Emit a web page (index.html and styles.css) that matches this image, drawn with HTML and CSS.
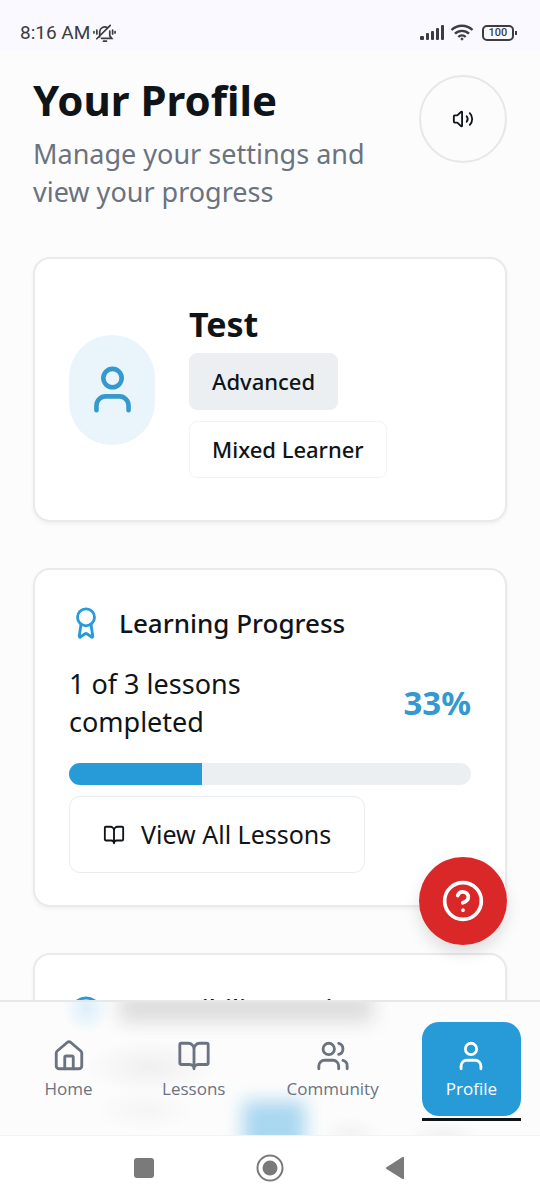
FILE: index.html
```html
<!DOCTYPE html>
<html lang="en">
<head>
    <meta charset="UTF-8">
    <meta name="viewport" content="width=device-width, initial-scale=1.0">
    <title>Your Profile</title>
    <link rel="stylesheet" href="styles.css">
</head>
<body>
    <div class="status-bar">
        <div class="status-group">
            <span class="clock">8:16 AM</span>
            <svg class="bell" viewBox="0 0 24 20" fill="none" stroke="currentColor" stroke-width="1.8" stroke-linecap="round">
                <path d="M7 14V8.500a5.200 5.200 0 0 1 8-4M17.500 8v5l2 2.500H9M4 16 18 2M11 18.500h3"/>
                <path d="M4 7v4M1 8.500v1.500M20.500 7v4M23 8.500v1.500"/>
            </svg>
        </div>
        <div class="status-group">
            <svg class="signal" viewBox="0 0 25 17" fill="currentColor">
                <rect x="0" y="12" width="4" height="4" rx="1"/>
                <rect x="6" y="9" width="3" height="7" rx="1"/>
                <rect x="11" y="7" width="3" height="9" rx="1"/>
                <rect x="16" y="4" width="3" height="12" rx="1"/>
                <rect x="21" y="1" width="3" height="15" rx="1"/>
            </svg>
            <svg class="wifi" viewBox="0 0 24 17" fill="none" stroke="currentColor" stroke-width="2.400">
                <path d="M1.500 6a15 15 0 0 1 21 0M5 9.700a10 10 0 0 1 14 0M8.300 13a5.400 5.400 0 0 1 7.400 0"/>
                <circle cx="12" cy="15" r="1" fill="currentColor" stroke-width="1"/>
            </svg>
            <span class="battery">100</span>
        </div>
    </div>

    <main class="content">
        <header class="page-header">
            <div>
                <h1>Your Profile</h1>
                <p class="subtitle">Manage your settings and view your progress</p>
            </div>
            <button class="audio-button" type="button" aria-label="Read page aloud">
                <svg class="icon icon-small" viewBox="0 0 24 24">
                    <path d="M11 4.700a.7.700 0 0 0-1.200-.5L6.400 7.600A1.400 1.400 0 0 1 5.400 8H3a1 1 0 0 0-1 1v6a1 1 0 0 0 1 1h2.400a1.400 1.400 0 0 1 1 .4l3.400 3.400a.7.700 0 0 0 1.200-.5z"/>
                    <path d="M16 9a5 5 0 0 1 0 6M19.400 18.400a9 9 0 0 0 0-12.700"/>
                </svg>
            </button>
        </header>

        <section class="card user-card">
            <div class="avatar">
                <svg class="icon" viewBox="0 0 24 24"><path d="M19 21v-2a4 4 0 0 0-4-4H9a4 4 0 0 0-4 4v2"/><circle cx="12" cy="7" r="4"/></svg>
            </div>
            <div class="user-info">
                <h2>Test</h2>
                <span class="badge badge-level">Advanced</span>
                <span class="badge">Mixed Learner</span>
            </div>
        </section>

        <section class="card">
            <h3 class="card-title">
                <svg class="icon" viewBox="0 0 24 24"><circle cx="12" cy="8" r="6"/><path d="M8.500 12.900 7.200 21.400a.5.500 0 0 0 .8.500l3.400-2.300a1 1 0 0 1 1.200 0l3.400 2.300a.5.500 0 0 0 .8-.5l-1.300-8.500"/></svg>
                Learning Progress
            </h3>
            <div class="progress-text">
                <p id="lessons-done">1 of 3 lessons completed</p>
                <strong>33%</strong>
            </div>
            <div class="progress-bar" role="progressbar" aria-labelledby="lessons-done" aria-valuenow="33" aria-valuemin="0" aria-valuemax="100">
                <div class="progress" style="width: 33%;"></div>
            </div>
            <a class="lessons-link" href="#lessons">
                <svg class="icon icon-small" viewBox="0 0 24 24"><path d="M12 7v14M3 18a1 1 0 0 1-1-1V4a1 1 0 0 1 1-1h5a4 4 0 0 1 4 4 4 4 0 0 1 4-4h5a1 1 0 0 1 1 1v13a1 1 0 0 1-1 1h-6a3 3 0 0 0-3 3 3 3 0 0 0-3-3z"/></svg>
                View All Lessons
            </a>
        </section>

        <section class="card">
            <h3 class="card-title">
                <svg class="icon" viewBox="0 0 24 24"><path d="M2.100 12.300a1 1 0 0 1 0-.7 10.700 10.700 0 0 1 19.800 0 1 1 0 0 1 0 .7 10.700 10.700 0 0 1-19.800 0"/><circle cx="12" cy="12" r="3"/></svg>
                Accessibility Settings
            </h3>
        </section>
    </main>

    <div class="bottom">
        <button class="help-button" type="button" aria-label="Help">
            <svg class="icon" viewBox="0 0 24 24"><circle cx="12" cy="12" r="10"/><path d="M9.100 9a3 3 0 0 1 5.800 1c0 2-3 3-3 3M12 17h.01"/></svg>
        </button>

        <nav class="tab-bar">
            <a class="tab" href="#home">
                <svg class="icon" viewBox="0 0 24 24"><path d="M15 21v-8a1 1 0 0 0-1-1h-4a1 1 0 0 0-1 1v8"/><path d="M3 10a2 2 0 0 1 .7-1.500l7-6a2 2 0 0 1 2.600 0l7 6A2 2 0 0 1 21 10v9a2 2 0 0 1-2 2H5a2 2 0 0 1-2-2z"/></svg>
                Home
            </a>
            <a class="tab" href="#lessons">
                <svg class="icon" viewBox="0 0 24 24"><path d="M12 7v14M3 18a1 1 0 0 1-1-1V4a1 1 0 0 1 1-1h5a4 4 0 0 1 4 4 4 4 0 0 1 4-4h5a1 1 0 0 1 1 1v13a1 1 0 0 1-1 1h-6a3 3 0 0 0-3 3 3 3 0 0 0-3-3z"/></svg>
                Lessons
            </a>
            <a class="tab" href="#community">
                <svg class="icon" viewBox="0 0 24 24"><path d="M16 21v-2a4 4 0 0 0-4-4H6a4 4 0 0 0-4 4v2M22 21v-2a4 4 0 0 0-3-3.870M16 3.130a4 4 0 0 1 0 7.750"/><circle cx="9" cy="7" r="4"/></svg>
                Community
            </a>
            <a class="tab active" href="#profile" aria-current="page">
                <svg class="icon" viewBox="0 0 24 24"><path d="M19 21v-2a4 4 0 0 0-4-4H9a4 4 0 0 0-4 4v2"/><circle cx="12" cy="7" r="4"/></svg>
                Profile
            </a>
        </nav>
    </div>

    <div class="system-nav">
        <button type="button" aria-label="Recent apps"><svg viewBox="0 0 28 28"><rect x="4" y="4" width="20" height="20" rx="3"/></svg></button>
        <button type="button" aria-label="Home screen"><svg viewBox="0 0 28 28"><circle cx="14" cy="14" r="12.500" fill="none" stroke="currentColor" stroke-width="2"/><circle cx="14" cy="14" r="7.500"/></svg></button>
        <button type="button" aria-label="Back"><svg viewBox="0 0 28 28"><path d="M22 3.500v21a1 1 0 0 1-1.500.5L4.500 15a1 1 0 0 1 0-1.800L20.500 3a1 1 0 0 1 1.500.5z"/></svg></button>
    </div>
</body>
</html>
```

FILE: styles.css
```css
* {
    box-sizing: border-box;
}
body {
    display: flex;
    flex-direction: column;
    height: 100vh;
    margin: 0;
    background: #fcfcfc;
    font-family: 'Noto Sans', 'Open Sans', sans-serif;
    color: #0f1419;
}
h1, h2, h3, p {
    margin: 0;
}
button {
    padding: 0;
    border: 0;
    background: none;
    font: inherit;
    color: inherit;
}
a {
    color: inherit;
    text-decoration: none;
}
.icon {
    flex: none;
    width: 34px;
    height: 34px;
    fill: none;
    stroke: currentColor;
    stroke-width: 2;
    stroke-linecap: round;
    stroke-linejoin: round;
}
.icon-small {
    width: 22px;
    height: 22px;
}

/* Phone status bar */
.status-bar {
    display: flex;
    flex: none;
    justify-content: space-between;
    align-items: center;
    padding: 16px 26px 2px 20px;
    height: 51px;
    background: #f9f9ff;
    color: #3c3c43;
    font-family: Roboto, sans-serif;
}
.status-group {
    display: flex;
    align-items: center;
    gap: 5px;
}
.clock {
    font-size: 19px;
}
.bell {
    width: 23px;
    height: 20px;
    margin-left: -2px;
}
.signal {
    width: 25px;
    height: 17px;
}
.wifi {
    width: 24px;
    height: 17px;
}
.battery {
    position: relative;
    margin-left: 3px;
    width: 32px;
    border: 2px solid currentColor;
    border-radius: 5px;
    font-size: 11px;
    font-weight: 500;
    line-height: 12px;
    text-align: center;
}
.battery::after {
    content: "";
    position: absolute;
    top: 4px;
    right: -5px;
    width: 2px;
    height: 4px;
    background: currentColor;
}

/* Page */
.content {
    display: flex;
    flex: 1;
    flex-direction: column;
    gap: 46px;
    min-height: 0;
    padding: 24px 33px 0;
    overflow: hidden;
}
.content > * {
    flex: none;
}
.page-header {
    display: flex;
    justify-content: space-between;
    align-items: flex-start;
    gap: 24px;
}
h1 {
    font-size: 42px;
    line-height: 50px;
}
.subtitle {
    margin-top: 10px;
    font-size: 27px;
    line-height: 38px;
    color: #6b7280;
}
.audio-button {
    display: flex;
    flex: none;
    justify-content: center;
    align-items: center;
    width: 88px;
    height: 88px;
    border: 2px solid #e5e7eb;
    border-radius: 50%;
}

/* Cards */
.card {
    padding: 34px 34px 32px;
    background: #fff;
    border: 2px solid #e8eaec;
    border-radius: 17px;
    box-shadow: 0 2px 4px rgba(0, 0, 0, 0.05);
}
.user-card {
    display: flex;
    align-items: center;
    gap: 34px;
    padding: 42px 34px;
}
.avatar {
    display: flex;
    justify-content: center;
    align-items: center;
    width: 86px;
    height: 110px;
    background: #e9f5fb;
    border-radius: 43px;
    color: #3399cf;
}
.avatar .icon {
    width: 55px;
    height: 55px;
}
.user-info {
    display: flex;
    flex-direction: column;
    align-items: flex-start;
    gap: 11px;
}
h2 {
    margin-bottom: -6px;
    font-size: 34px;
    line-height: 47px;
}
.badge {
    padding: 11px 22px;
    border: 1px solid #f1f2f4;
    border-radius: 8px;
    font-size: 22px;
    font-weight: 500;
    line-height: 33px;
}
.badge-level {
    background: #ebeff2;
    border-color: #ebeff2;
}
.card-title {
    display: flex;
    align-items: center;
    gap: 16px;
    font-size: 26px;
    font-weight: 500;
    line-height: 38px;
}
.card-title .icon {
    color: #279bd8;
}
.progress-text {
    display: flex;
    justify-content: space-between;
    align-items: center;
    gap: 80px;
    margin: 23px 0 22px;
    font-size: 27px;
    line-height: 38px;
}
.progress-text strong {
    font-size: 33px;
    color: #3399cf;
}
.progress-bar {
    height: 22px;
    margin-bottom: 11px;
    background: #ebeff2;
    border-radius: 11px;
    overflow: hidden;
}
.progress {
    height: 100%;
    background: #279bd8;
}
.lessons-link {
    display: inline-flex;
    align-items: center;
    gap: 16px;
    padding: 20px 33px;
    border: 1px solid #eaecee;
    border-radius: 11px;
    font-size: 25px;
    line-height: 35px;
    vertical-align: top;
}

/* Floating help button */
.bottom {
    position: relative;
    flex: none;
}
.help-button {
    position: absolute;
    right: 33px;
    bottom: 190px;
    display: flex;
    justify-content: center;
    align-items: center;
    width: 88px;
    height: 88px;
    background: #da2728;
    border-radius: 50%;
    box-shadow: 0 8px 16px rgba(0, 0, 0, 0.12);
    color: #fff;
}
.help-button .icon {
    width: 44px;
    height: 44px;
}

.tab-bar {
    position: relative;
    display: flex;
    justify-content: space-between;
    padding: 20px 19px 19px;
    background:
        radial-gradient(24px 26px at 16% 6px, #dceffa, transparent),
        radial-gradient(68px 28px at 28% 65px, #f0f0f0, transparent),
        radial-gradient(50px 22px at 27% 108px, #f5f5f5, transparent),
        radial-gradient(30px 16px at 65% 130px, #f3f3f3, transparent),
        radial-gradient(36px 16px at 82% 134px, #f1f1f1, transparent),
        #fcfcfc;
    border-top: 2px solid #e5e7eb;
    overflow: hidden;
}
.tab-bar::before,
.tab-bar::after {
    content: "";
    position: absolute;
    filter: blur(9px);
}
.tab-bar::before {
    top: -8px;
    right: 31%;
    left: 22%;
    height: 28px;
    background: #dcdcdc;
}
.tab-bar::after {
    bottom: -20px;
    left: 45%;
    width: 62px;
    height: 54px;
    background: #a9d7f0;
}
.tab {
    position: relative;
    z-index: 1;
    display: flex;
    flex-direction: column;
    align-items: center;
    gap: 4px;
    min-width: 99px;
    padding: 17px 17px 15px;
    border-radius: 17px;
    font-family: 'Open Sans', 'Noto Sans', sans-serif;
    font-size: 17px;
    font-weight: 500;
    line-height: 24px;
    color: #6b7280;
}
.tab.active {
    background: #279bd8;
    color: #fff;
}
.tab.active::after {
    content: "";
    position: absolute;
    right: 0;
    bottom: -5px;
    left: 0;
    height: 3px;
    background: #0f1419;
}

/* Android buttons */
.system-nav {
    display: flex;
    flex: none;
    justify-content: center;
    align-items: center;
    gap: 98px;
    height: 65px;
    background: #fff;
    border-top: 1px solid #f3f3f3;
    color: #7a7a7a;
}
.system-nav svg {
    display: block;
    width: 28px;
    height: 28px;
    fill: currentColor;
}
```
